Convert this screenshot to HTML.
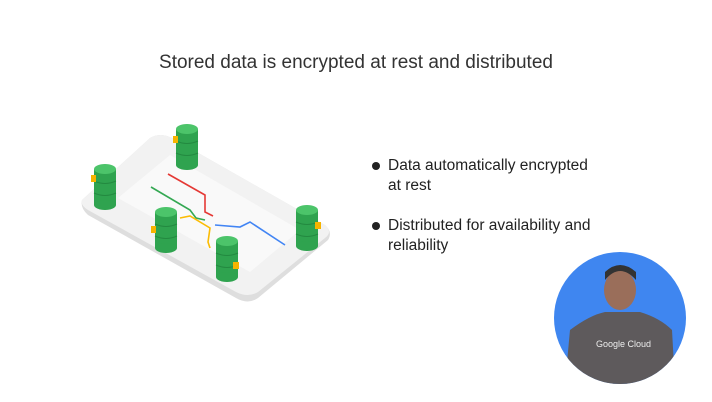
<!DOCTYPE html>
<html><head><style>
body{margin:0;width:712px;height:402px;background:#fff;overflow:hidden;font-family:"Liberation Sans",sans-serif;position:relative}
.t{position:absolute;top:52px;left:0;width:712px;text-align:center;font-size:19px;color:#333}
ul{position:absolute;left:370px;top:156px;margin:0;padding:0;list-style:none;font-size:15.5px;color:#222;line-height:20px}
li{position:relative;padding-left:18px;margin-bottom:20px}
li:before{content:"";position:absolute;left:2px;top:6px;width:8px;height:8px;border-radius:50%;background:#222}
</style></head><body>
<div class="t">Stored data is encrypted at rest and distributed</div>
<ul><li>Data automatically encrypted<br>at rest</li><li>Distributed for availability and<br>reliability</li></ul>
<svg width="712" height="402" style="position:absolute;left:0;top:0">
<defs><g id="c"><rect x="-11" y="-16" width="22" height="36" fill="#2fa34f"/><ellipse cx="0" cy="20" rx="11" ry="5" fill="#2fa34f"/><ellipse cx="0" cy="-16" rx="11" ry="5" fill="#4cc46a"/><path d="M-11 -4 q11 5 22 0 M-11 8 q11 5 22 0" stroke="#238a40" fill="none"/></g></defs>
<path d="M82 200 L150 138 Q160 132 172 138 L325 225 Q333 232 328 240 L258 298 Q248 305 236 298 L88 215 Q80 208 82 200Z" fill="#dedede"/>
<path d="M82 200 L150 138 Q160 132 172 138 L325 225 Q333 232 325 238 L258 292 Q248 298 236 292 L88 210 Q80 205 82 200Z" fill="#f2f2f2"/>
<path d="M118 198 L170 155 L300 230 L250 272Z" fill="#f9f9f9"/>
<path d="M168 174 L205 195 L205 212 L213 216" stroke="#e53935" stroke-width="1.6" fill="none"/>
<path d="M151 187 L190 210 L196 218 L205 220" stroke="#34a853" stroke-width="1.6" fill="none"/>
<path d="M180 218 L190 216 L210 228 L208 242 L210 248" stroke="#fbbc04" stroke-width="1.6" fill="none"/>
<path d="M215 225 L240 227 L250 222 L285 245" stroke="#4285f4" stroke-width="1.6" fill="none"/>
<use href="#c" x="187" y="145"/><use href="#c" x="105" y="185"/><use href="#c" x="166" y="228"/><use href="#c" x="307" y="226"/><use href="#c" x="227" y="257"/>
<rect x="91" y="175" width="5" height="7" fill="#f6b400"/><rect x="151" y="226" width="5" height="7" fill="#f6b400"/><rect x="315" y="222" width="6" height="7" fill="#f6b400"/><rect x="233" y="262" width="6" height="7" fill="#f6b400"/><rect x="173" y="136" width="5" height="7" fill="#f6b400"/>
<circle cx="620" cy="318" r="66" fill="#3f86f0"/>
<clipPath id="k"><circle cx="620" cy="318" r="66"/></clipPath>
<g clip-path="url(#k)"><path d="M565 384 L570 330 Q590 315 605 312 L640 312 Q660 318 672 330 L675 384Z" fill="#5e5a5c"/>
<ellipse cx="620" cy="290" rx="16" ry="20" fill="#9a6e5a"/><path d="M605 280 Q620 262 636 280 L636 272 Q620 258 605 272Z" fill="#333"/>
<text x="596" y="347" font-size="9" fill="#eee" font-family="Liberation Sans">Google Cloud</text></g>
</svg>
</body></html>
